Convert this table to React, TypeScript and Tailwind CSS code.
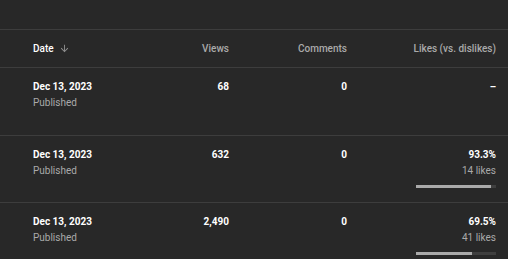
type Row = {
  date: string;
  views: string;
  comments: string;
  pct?: string;
  likes?: string;
  ratio?: number;
  h: string;
};

const rows: Row[] = [
  { date: "Dec 13, 2023", views: "68", comments: "0", h: "h-[68px]" },
  { date: "Dec 13, 2023", views: "632", comments: "0", pct: "93.3%", likes: "14 likes", ratio: 93.3, h: "h-[67px]" },
  { date: "Dec 13, 2023", views: "2,490", comments: "0", pct: "69.5%", likes: "41 likes", ratio: 69.5, h: "h-[67px]" },
];

const cols = "grid grid-cols-[116px_80px_118px_149px] pl-[33px]";

function ArrowDown() {
  return (
    <svg viewBox="0 0 24 24" className="w-[11px] h-[11px] fill-[#909090]">
      <path d="M20 12l-1.41-1.41L13 16.17V4h-2v12.17l-5.58-5.59L4 12l8 8 8-8z" />
    </svg>
  );
}

export default function App() {
  return (
    <div
      className="w-[508px] h-[259px] overflow-hidden bg-[#282828] text-[10px] text-white"
      style={{ fontFamily: "Roboto, 'Liberation Sans', sans-serif" }}
    >
      <div className="h-[30px] border-b border-[#3d3d3d]" />
      <div className={`${cols} h-[38px] items-center border-b border-[#3d3d3d] font-medium text-[#aaaaaa]`}>
        <div className="flex items-center gap-[5px] text-white">
          Date <ArrowDown />
        </div>
        <div className="text-right">Views</div>
        <div className="text-right">Comments</div>
        <div className="text-right">Likes (vs. dislikes)</div>
      </div>
      {rows.map((r, i) => (
        <div key={i} className={`${cols} ${r.h} pt-[11px] border-b border-[#3d3d3d] leading-[16px]`}>
          <div>
            <div className="font-bold">{r.date}</div>
            <div className="text-[#aaaaaa]">Published</div>
          </div>
          <div className="text-right font-bold">{r.views}</div>
          <div className="text-right font-bold">{r.comments}</div>
          <div className="flex flex-col items-end">
            {r.pct ? (
              <>
                <div className="font-bold">{r.pct}</div>
                <div className="text-[#aaaaaa]">{r.likes}</div>
                <div className="mt-[6px] w-[80px] h-[3px] bg-[#3f3f3f]">
                  <div className="h-full bg-[#aaaaaa]" style={{ width: `${r.ratio}%` }} />
                </div>
              </>
            ) : (
              <div className="font-bold">–</div>
            )}
          </div>
        </div>
      ))}
    </div>
  );
}
